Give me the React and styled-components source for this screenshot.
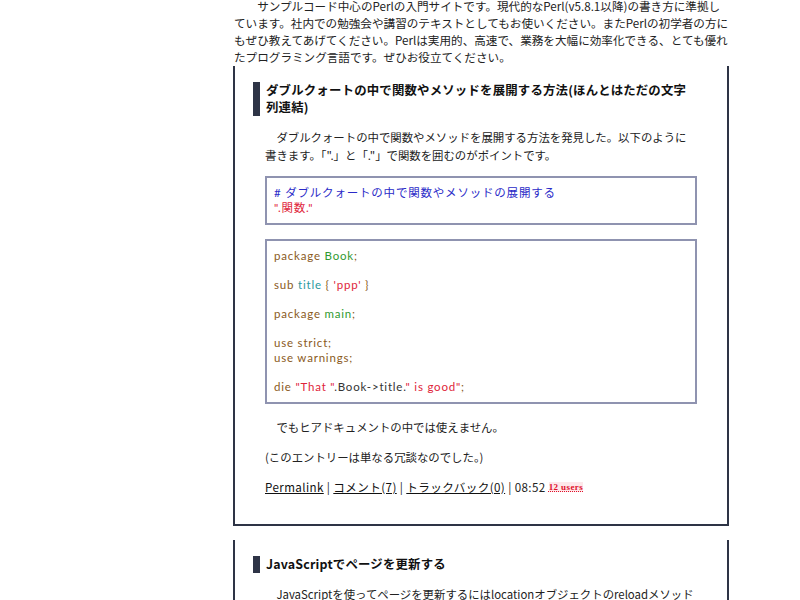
import React from "react";
import styled, { createGlobalStyle } from "styled-components";

const G = createGlobalStyle`
  body { margin: 0; background: #fff; font-family: "Noto Sans CJK JP", sans-serif; color: #222; }
`;
const Col = styled.div`
  width: 496px; margin-left: 233px; margin-top: -2px;
`;
const Intro = styled.p`
  font-size: 11.6px; line-height: 17px; margin: 0 0 0 1px; text-indent: 2em;
`;
const Entry = styled.div`
  border: 2px solid #2e3446; border-top: none;
  padding: 16px 30px 28px 30px;
  margin-bottom: 14px;
`;
const H = styled.h2`
  margin: 0 0 12px -12px; border-left: 7px solid #2e3446; padding-left: 6px;
  font-size: 12.4px; line-height: 17px; font-weight: bold; letter-spacing: 0.2px; color: #111;
`;
const P = styled.p`
  font-size: 11.4px; line-height: 18px; margin: 0 0 12px; text-indent: ${p => p.$indent ? "1em" : "0"};
`;
const Code = styled.pre`
  border: 2px solid #8f93b0; margin: 0 0 14px; padding: 8px 7px;
  font-family: Lato, "Noto Sans CJK JP", sans-serif; font-size: 11.5px; line-height: 14.5px; white-space: pre-wrap;
  letter-spacing: 0.8px;
`;
const C = styled.span` color: ${p => p.$c}; `;
const A = styled.a` color: #111; text-decoration: underline; `;
const Badge = styled.span`
  color: #e0102a; font-size: 9px; font-weight: bold; text-decoration: underline dotted; vertical-align: 2px;
  background: #fde8ea; font-family: "Liberation Serif", serif;
`;
const Meta = styled.p` font-size: 11.6px; margin: 0; line-height: 18px; letter-spacing: 0.4px; `;

const B = "#8a5a1c", Gn = "#2f9a2f", R = "#e0243a", T = "#2a9aa0";

export default function App() {
  return (
    <>
      <G />
      <Col>
        <Intro>サンプルコード中心のPerlの入門サイトです。現代的なPerl(v5.8.1以降)の書き方に準拠しています。社内での勉強会や講習のテキストとしてもお使いください。またPerlの初学者の方にもぜひ教えてあげてください。Perlは実用的、高速で、業務を大幅に効率化できる、とても優れたプログラミング言語です。ぜひお役立てください。</Intro>
        <Entry>
          <H>ダブルクォートの中で関数やメソッドを展開する方法(ほんとはただの文字列連結)</H>
          <P $indent>ダブルクォートの中で関数やメソッドを展開する方法を発見した。以下のように書きます。「".」と「."」で関数を囲むのがポイントです。</P>
          <Code><C $c="#2b2bc8"># ダブルクォートの中で関数やメソッドの展開する</C>{"\n"}<C $c={R}>".関数."</C></Code>
          <Code><C $c={B}>package </C><C $c={Gn}>Book</C><C $c={B}>;</C>{"\n\n"}<C $c={B}>sub </C><C $c={T}>title</C><C $c={B}> {"{"} </C><C $c={R}>'ppp'</C><C $c={B}> {"}"}</C>{"\n\n"}<C $c={B}>package </C><C $c={Gn}>main</C><C $c={B}>;</C>{"\n\n"}<C $c={B}>use strict;{"\n"}use warnings;</C>{"\n\n"}<C $c={B}>die </C><C $c={R}>"That "</C><C $c="#333">.Book-&gt;title.</C><C $c={R}>" is good"</C><C $c={B}>;</C></Code>
          <P $indent>でもヒアドキュメントの中では使えません。</P>
          <P>(このエントリーは単なる冗談なのでした。)</P>
          <Meta><A href="#">Permalink</A> | <A href="#">コメント(7)</A> | <A href="#">トラックバック(0)</A> | 08:52 <Badge>12 users</Badge></Meta>
        </Entry>
        <Entry>
          <H>JavaScriptでページを更新する</H>
          <P $indent>JavaScriptを使ってページを更新するにはlocationオブジェクトのreloadメソッドを使います。</P>
        </Entry>
      </Col>
    </>
  );
}
